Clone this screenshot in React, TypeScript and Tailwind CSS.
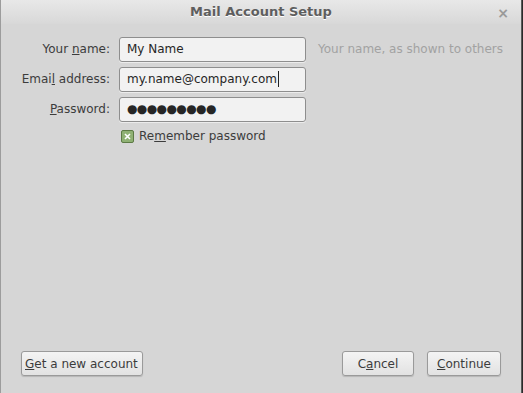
import React from 'react'

const font = { fontFamily: '"DejaVu Sans", "Liberation Sans", sans-serif' }

function Field({ label, value, caret, dots }: { label: React.ReactNode; value: string; caret?: boolean; dots?: boolean }) {
  return (
    <div className="flex items-center h-[30px]">
      <div className="w-[110px] pr-[1px] text-right text-[12px] text-[#3c3c3c]">{label}</div>
      <div className="ml-[8px] w-[187px] h-[25px] rounded-[3px] border border-[#8e8e8e] bg-[#f2f2f2] shadow-[0_1px_0_#ececec] flex items-center px-[7px] text-[12px] text-[#262626]">
        <span className={dots ? 'tracking-[-0.6px]' : ''}>{value}</span>
        {caret && <span className="inline-block w-[1px] h-[16px] bg-[#222] ml-[1px]" />}
      </div>
    </div>
  )
}

function Btn({ children, className }: { children: React.ReactNode; className?: string }) {
  return (
    <button className={`h-[25px] whitespace-nowrap rounded-[3px] border border-[#9a9a9a] bg-gradient-to-b from-[#f4f4f4] to-[#e2e2e2] text-[12px] text-[#3c3c3c] shadow-[0_1px_1px_rgba(0,0,0,0.15)] ${className ?? ''}`}>
      {children}
    </button>
  )
}

export default function App() {
  return (
    <div className="w-[523px] h-[393px] bg-[#2a2a2a] flex" style={font}>
      <div className="w-[522px] h-full flex flex-col bg-[#d6d6d6] border-l border-[#9c9c9c] border-r border-r-[#5a5a5a]">
        <div className="h-[24px] flex items-center justify-center relative bg-gradient-to-b from-[#e8e8e8] to-[#d8d8d8]">
          <span className="text-[13px] font-bold text-[#5e5e5e] [text-shadow:0_1px_0_#fff]">Mail Account Setup</span>
          <span className="absolute right-[12px] top-[3px] text-[14px] font-bold text-[#9a9a9a]">×</span>
        </div>
        <div className="flex-1 flex flex-col pt-[10px]">
          <div className="flex items-center">
            <Field label={<>Your <u>n</u>ame:</>} value="My Name" />
            <span className="ml-[12px] text-[12px] text-[#a2a2a2]">Your name, as shown to others</span>
          </div>
          <Field label={<>Emai<u>l</u> address:</>} value="my.name@company.com" caret />
          <Field label={<><u>P</u>assword:</>} value="●●●●●●●●●" dots />
          <div className="flex items-center ml-[120px] mt-[3px] text-[12px] text-[#3c3c3c]">
            <span className="w-[13px] h-[13px] rounded-[2px] border border-[#5c7a45] bg-[#8fb174] flex items-center justify-center">
              <svg width="7" height="7" viewBox="0 0 7 7">
                <path d="M1 1L6 6M6 1L1 6" stroke="#fff" strokeWidth="1.6" />
              </svg>
            </span>
            <span className="ml-[5px]">Re<u>m</u>ember password</span>
          </div>
          <div className="flex-1" />
          <div className="flex items-center px-[20px] pb-[17px]">
            <Btn className="w-[122px] text-left pl-[3px]"><u>G</u>et a new account</Btn>
            <div className="flex-1" />
            <Btn className="w-[72px]">C<u>a</u>ncel</Btn>
            <Btn className="w-[74px] ml-[13px]"><u>C</u>ontinue</Btn>
          </div>
        </div>
      </div>
    </div>
  )
}
